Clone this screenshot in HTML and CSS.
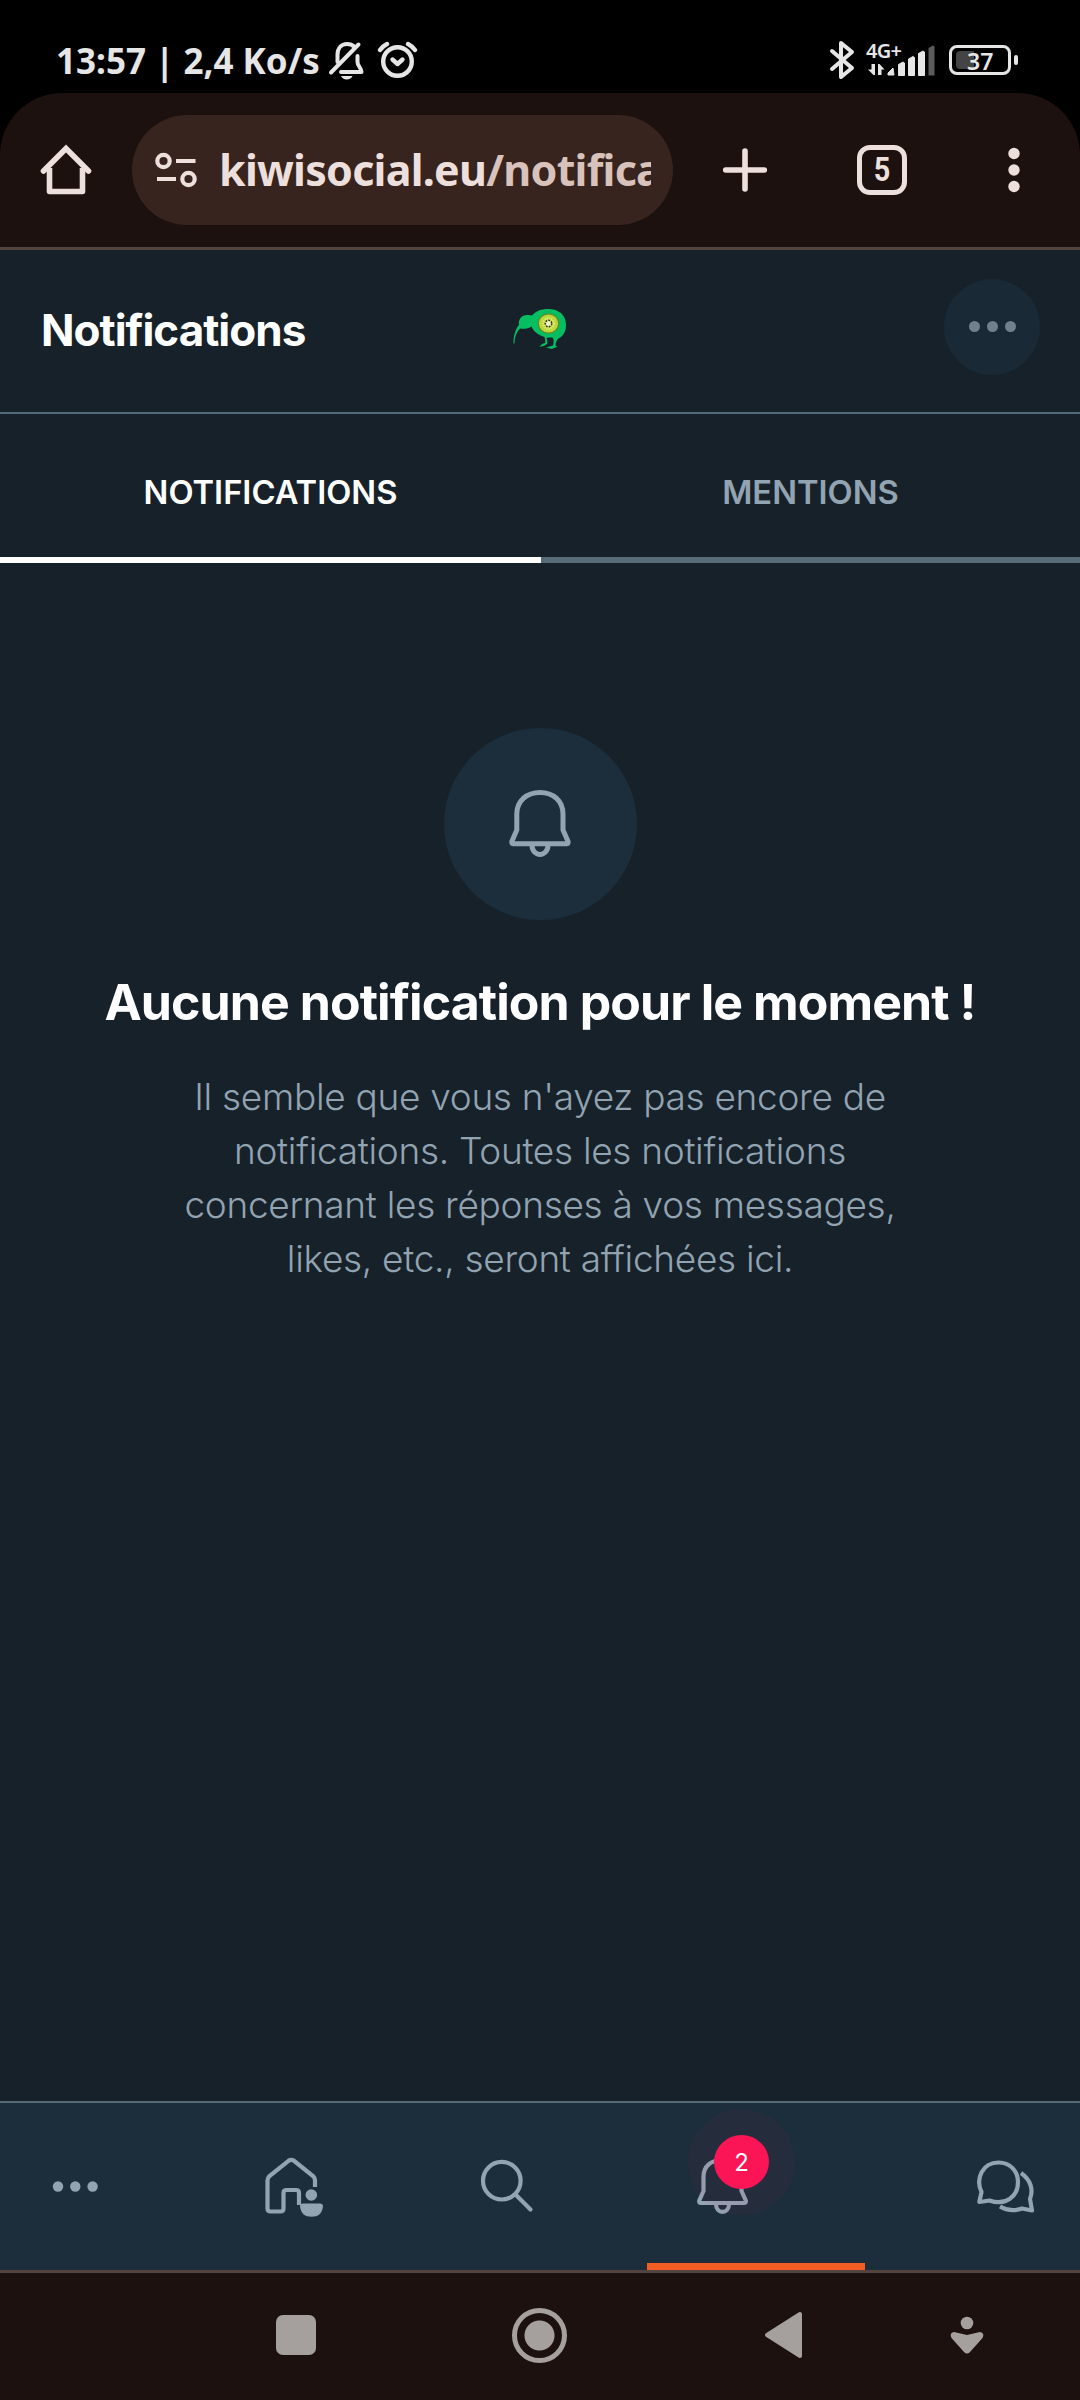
FILE: index.html
```html
<!DOCTYPE html>
<html lang="fr">
<head>
<meta charset="utf-8">
<title>Notifications</title>
<link rel="stylesheet" href="styles.css">
</head>
<body>
<div class="status">
  <span class="clock">13:57 | 2,4 Ko/s</span>
  <svg class="ico muted" width="36" height="42" viewBox="328 40 36 42">
    <g fill="none" stroke="#e6e6e6" stroke-width="4" stroke-linecap="round" stroke-linejoin="round">
      <path d="M337.500 62V55C337.500 48 341.500 44 347 44C350 44 352.500 45 354 46.500M357.500 56V62C357.500 66 361.500 68 361.500 72H341"/>
      <path d="M331 72.500L358.500 44.500"/>
    </g>
    <path d="M341 76H352.500C351.500 78.300 349.500 79.500 346.700 79.500S342 78.300 341 76Z" fill="#e6e6e6"/>
  </svg>
  <svg class="ico alarm" width="42" height="42" viewBox="377 40 42 42" fill="none" stroke="#e6e6e6" stroke-width="4.400" stroke-linecap="round" stroke-linejoin="round">
    <circle cx="397.500" cy="61.500" r="14.300"/><path d="M392.500 59.500L397.500 64L402.500 59.500"/><path d="M380 50Q383 46 387 44M415 50Q412 46 408 44"/>
  </svg>
  <svg class="ico bluetooth" width="26" height="42" viewBox="829 40 26 42" fill="none" stroke="#e6e6e6" stroke-width="4" stroke-linecap="round" stroke-linejoin="round">
    <path d="M832 51L852 68L841 77V43L852 52L832 69"/>
  </svg>
  <div class="network">
    <span class="net-label">4G+</span>
    <svg class="bars" width="70" height="34" viewBox="866 43 70 34" fill="#e6e6e6">
      <path d="M888 75V73L893 68L894 75ZM898.500 75.500V64.500L903 62L904.500 63V75.500ZM908.500 75.500V59L913 56.500L914.500 57.500V75.500ZM918.500 75.500V53.500L923 51L924.500 52V75.500Z" stroke="#e6e6e6" stroke-width="1" stroke-linejoin="round"/>
      <path d="M928.500 75.500V48L933 45.500L934.500 46.500V75.500Z" fill="#5b5b5b"/>
      <path d="M871.500 64H875V75H873.500L868 69.500H871.500ZM878 64H879.500L884.500 69.500H881.500V75H878Z"/>
    </svg>
  </div>
  <div class="battery"><span class="level"></span><span class="pct">37</span></div>
  <span class="nub"></span>
</div>

<div class="toolbar">
  <svg class="tb-home" width="54" height="54" viewBox="39 143 54 54" fill="none" stroke="#eddfdb" stroke-width="5.600" stroke-linejoin="round">
    <path d="M49.500 168V191.500H82.500V168"/><path d="M43.500 171L66 148.500L88.500 171" stroke-linecap="round" stroke-linejoin="miter"/>
  </svg>
  <div class="omnibox">
    <svg width="44" height="38" viewBox="154 151 44 38" fill="none" stroke="#eddfdb" stroke-width="4.200">
      <circle cx="163.500" cy="161" r="6.200"/><circle cx="188.500" cy="179" r="6.200"/><path d="M176 161H195.500M157 179H176"/>
    </svg>
    <div class="url"><span class="host">kiwisocial.eu</span><span class="path">/notifica</span></div>
  </div>
  <svg class="tb-plus" width="50" height="50" viewBox="720 145 50 50" stroke="#eddfdb" stroke-width="5.600" stroke-linecap="round"><path d="M745 151V189M725.700 170H764.300"/></svg>
  <div class="tabcount"><span class="count">5</span></div>
  <svg class="tb-more" width="14" height="50" viewBox="1007 145 14 50" fill="#eddfdb"><circle cx="1014" cy="153.500" r="5.700"/><circle cx="1014" cy="170" r="5.700"/><circle cx="1014" cy="186.500" r="5.700"/></svg>
</div>

<header class="header">
  <h1 class="title">Notifications</h1>
  <svg class="logo" width="56" height="44" viewBox="512 307 56 44">
    <path d="M514.500 343.500C514 334 518.500 326 520 325C519 319 523 315 528 315C530 314.700 531.500 315 533 315.500C537 311 542 309 549 309C560 309 567 315 567 325C567 333 563 336.500 559.500 338.500C557.500 340 556.800 342.500 556.500 345.500L558.500 346.700L555 348L553 349L547 347.500L554 345.500C555 342 555 339.500 553.500 337.500C551 337.500 548.500 337.500 547.500 338C548.500 341 548.300 342.500 548.300 343.500L546 345.500L540.500 347L543 344L546 343C546.500 341 546 338.500 545.500 337C538 334.500 534.500 331 532.500 326.500C529.500 329 524 329 521 328.500C517.500 332 515.500 338 515.500 343.500Z" fill="#06be62"/>
    <ellipse cx="549.500" cy="323.500" rx="10.200" ry="9.700" fill="#bdd63a" stroke="#5f8a26" stroke-width="1.200"/>
    <circle cx="549.500" cy="323.500" r="5.200" fill="none" stroke="#e1ec78" stroke-width="2.400" stroke-dasharray="1.200 1"/>
    <circle cx="549.500" cy="323.500" r="3.200" fill="#f3f3b9" stroke="#263018" stroke-width="1.500" stroke-dasharray="1.700 1.200"/>
  </svg>
  <div class="menu"><i></i><i></i><i></i></div>
</header>

<div class="tabs">
  <div class="tab active">NOTIFICATIONS</div>
  <div class="tab"><span>MENTIONS</span></div>
</div>

<main class="empty">
  <div class="disc">
    <svg width="66" height="70" viewBox="507.500 789 66 70" fill="none" stroke="#92a3b1" stroke-width="5" stroke-linejoin="round">
      <path d="M517.300 814C517.300 801 527 792.500 540.500 792.500S563.500 801 563.500 814V830L568.600 841.500Q569 843.800 567 843.800H514Q512 843.800 512.300 841.500L517.300 830Z"/><path d="M532.500 845C532.500 857.500 548.500 857.500 548.500 845"/>
    </svg>
  </div>
  <h2 class="heading">Aucune notification pour le moment !</h2>
  <p class="text">Il semble que vous n'ayez pas encore de<br>notifications. Toutes les notifications<br>concernant les réponses à vos messages,<br>likes, etc., seront affichées ici.</p>
</main>

<nav class="nav">
  <div class="item more">
    <svg width="60" height="60" viewBox="45 2156 60 60" fill="#92a3b1"><circle cx="58" cy="2186.500" r="5.200"/><circle cx="75.300" cy="2186.500" r="5.200"/><circle cx="92.600" cy="2186.500" r="5.200"/></svg>
  </div>
  <div class="item home">
    <svg width="60" height="62" viewBox="264 2156 60 62">
      <path d="M315 2187V2180Q315 2178 313 2176L294 2160.800Q291.200 2158.800 288.500 2160.800L269.500 2176Q267.500 2178 267.500 2180.500V2208.500Q267.500 2211.500 270.500 2211.500H280.500Q283.500 2211.500 283.500 2208.500V2193Q283.500 2190 286.500 2190H296Q299 2190 299 2193V2205" fill="none" stroke="#92a3b1" stroke-width="4.200"/>
      <circle cx="311.300" cy="2195" r="5.800" fill="#92a3b1"/><path d="M303 2203.500H320Q323 2203.500 323 2206.500C322 2214 318 2216.700 311.500 2216.700S301 2214 300 2206.500Q300 2203.500 303 2203.500Z" fill="#92a3b1"/>
    </svg>
  </div>
  <div class="item search">
    <svg width="60" height="60" viewBox="477 2156 60 60" fill="none" stroke="#92a3b1" stroke-width="4.200" stroke-linecap="round"><circle cx="501.800" cy="2180.700" r="18.800"/><path d="M515.500 2194.500L530.500 2209.500"/></svg>
  </div>
  <div class="item bell">
    <svg width="60" height="60" viewBox="692 2156 60 60" fill="none" stroke="#92a3b1" stroke-width="4.200" stroke-linejoin="round"><path d="M703.500 2177C703.500 2166 711 2160 722.300 2160S741.500 2166 741.500 2177V2191L745.800 2200.500Q746.300 2203 744.500 2203H700.500Q698.700 2203 699.300 2200.500L703.500 2191Z"/><path d="M716 2204C716 2214.500 729 2214.500 729 2204"/></svg>
    <div class="badge">2</div>
  </div>
  <div class="item chat">
    <svg width="62" height="60" viewBox="975 2156 62 60" fill="none" stroke="#92a3b1" stroke-width="4.200" stroke-linejoin="round"><path d="M981.500 2192C975 2178 983 2162.500 998.500 2162.500C1010 2162.500 1018 2171 1018 2182C1018 2197 1005 2206 989.500 2200.500L979.300 2202Z"/><path d="M1021 2173C1031 2180 1033.500 2190 1030 2199L1032 2210.500L1022 2208.500C1013 2211.500 1005 2209.500 1000 2206.500"/></svg>
  </div>
</nav>

<div class="sysnav">
  <span class="recents"></span>
  <span class="homebtn"></span>
  <svg class="back" width="42" height="50" viewBox="762 2310 42 50" fill="#a5a09d" stroke="#a5a09d" stroke-width="4" stroke-linejoin="round"><path d="M767 2335L800 2314V2356Z"/></svg>
  <svg class="person" width="36" height="42" viewBox="948.500 2315 36 42" fill="#a5a09d"><circle cx="966.500" cy="2323" r="6.300"/><path d="M953.500 2332L966.500 2335L979.500 2332Q984.500 2333 982 2338L969.500 2352Q966.500 2355 963.500 2352L951 2338Q948.500 2333 953.500 2332Z"/></svg>
</div>
</body>
</html>
```
FILE: styles.css
```css
* { box-sizing: border-box; }
body {
  margin: 0;
  width: 1080px;
  height: 2400px;
  display: flex;
  flex-direction: column;
  overflow: hidden;
  background: #000;
  font-family: Inter, sans-serif;
}
svg { display: block; flex: none; }

.status {
  height: 93px;
  padding: 40px 0 0 56px;
  display: flex;
  align-items: flex-start;
  color: #e6e6e6;
  font-family: "Noto Sans", sans-serif;
}
.clock {
  width: 272px;
  font-size: 35px;
  line-height: 41px;
  font-weight: 700;
  white-space: nowrap;
}
.alarm { margin-left: 13px; }
.bluetooth { margin-left: auto; }
.network { margin-left: 11px; width: 70px; position: relative; }
.net-label {
  position: absolute;
  top: 0;
  left: 0;
  font-size: 20px;
  line-height: 21px;
  font-weight: 600;
  letter-spacing: -.7px;
}
.bars { margin-top: 3px; }
.battery {
  position: relative;
  margin: 5px 0 0 13px;
  width: 62px;
  height: 30px;
  border: 3px solid #e6e6e6;
  border-radius: 8px;
}
.level {
  position: absolute;
  left: 4px;
  top: 3px;
  width: 18px;
  height: 18px;
  border-radius: 4px 0 0 4px;
  background: #444;
}
.pct {
  position: absolute;
  left: 15px;
  top: 1px;
  font-size: 23px;
  line-height: 24px;
  font-weight: 600;
}
.nub {
  margin: 15px 62px 0 3px;
  width: 4px;
  height: 10px;
  border-radius: 2px;
  background: #e6e6e6;
}

.toolbar {
  height: 157px;
  padding-left: 39px;
  display: flex;
  align-items: center;
  background: #1c110e;
  border-bottom: 3px solid #54443f;
  border-radius: 62px 62px 0 0;
}
.omnibox {
  margin-left: 39px;
  width: 541px;
  height: 110px;
  padding: 0 22px;
  display: flex;
  align-items: center;
  border-radius: 55px;
  background: #37241e;
}
.url {
  margin-left: 21px;
  flex: 1;
  overflow: hidden;
  white-space: nowrap;
  font-family: "Noto Sans", sans-serif;
  font-size: 43px;
  line-height: 60px;
  font-weight: 700;
  letter-spacing: -.75px;
  color: #eddfdb;
}
.path { color: #d8c2bb; }
.tb-plus { margin-left: 47px; }
.tabcount {
  margin-left: 87px;
  width: 50px;
  height: 50px;
  border: 5.6px solid #eddfdb;
  border-radius: 13px;
  color: #eddfdb;
  font: 700 34px/39px Roboto, sans-serif;
  text-align: center;
}
.count { display: block; transform: scaleX(.85); }
.tb-more { margin-left: 100px; }

.header {
  height: 164px;
  padding-left: 41px;
  display: flex;
  background: #17212a;
  border-bottom: 2px solid #526b78;
}
.title {
  margin: 54px 0 0;
  width: 470px;
  font-size: 44px;
  line-height: 52px;
  font-weight: 700;
  letter-spacing: -1px;
  color: #fff;
}
.logo { margin-top: 57px; }
.menu {
  margin: 29px 0 0 377px;
  width: 96px;
  height: 96px;
  padding-bottom: 1px;
  border-radius: 50%;
  background: #192935;
  display: flex;
  align-items: center;
  justify-content: center;
  gap: 7px;
}
.menu i { width: 11px; height: 11px; border-radius: 50%; background: #70808d; }

.tabs { height: 149px; display: flex; background: #17212a; }
.tab {
  flex: 1;
  padding-top: 58px;
  border-bottom: 6px solid #576c79;
  text-align: center;
  font-size: 32.7px;
  line-height: 40px;
  font-weight: 600;
  color: #92a3b1;
}
.tab.active { flex: 0 0 541px; color: #fff; border-color: #fff; }

.empty {
  height: 1538px;
  padding-top: 165px;
  display: flex;
  flex-direction: column;
  align-items: center;
  background: #17212a;
}
.disc {
  width: 193px;
  height: 192px;
  border-radius: 50%;
  background: #1c2e3b;
  display: flex;
  align-items: center;
  justify-content: center;
}
.heading {
  margin: 52px 0 0;
  font-size: 50px;
  line-height: 60px;
  font-weight: 700;
  letter-spacing: -.92px;
  white-space: nowrap;
  color: #fff;
}
.text {
  margin: 38px 0 0;
  font-size: 37px;
  line-height: 54px;
  font-weight: 300;
  letter-spacing: -.3px;
  text-align: center;
  white-space: nowrap;
  color: #92a3b1;
}

.nav {
  height: 172px;
  display: grid;
  grid-template-columns: 216px 213px 218px 218px 1fr;
  background: #1c2e3b;
  border-top: 2px solid #526b78;
  border-bottom: 3px solid #54443f;
}
.item { padding: 53px 0 0 45px; position: relative; }
.item.home { padding-left: 48px; }
.item.search { padding-left: 48px; }
.item.chat { padding-left: 110px; }
.item.bell { border-bottom: 7px solid #f15d22; }
.badge {
  position: absolute;
  left: 67px;
  top: 32px;
  width: 55px;
  height: 54px;
  border-radius: 50%;
  background: #fb1456;
  box-shadow: 0 0 0 26px rgba(251, 20, 86, .045);
  color: #fff;
  font-size: 24px;
  line-height: 55px;
  text-align: center;
}

.sysnav { height: 127px; display: flex; align-items: flex-start; background: #1c110e; }
.recents { margin: 42px 0 0 276px; width: 40px; height: 40px; border-radius: 7px; background: #a5a09d; }
.homebtn {
  margin: 35px 0 0 196px;
  width: 55px;
  height: 55px;
  border: 5px solid #a5a09d;
  border-radius: 50%;
  padding: 7.5px;
  background: radial-gradient(circle, #a5a09d 14.5px, transparent 15.5px);
}
.back { margin: 37px 0 0 195px; }
.person { margin: 42px 0 0 144.5px; }
```
